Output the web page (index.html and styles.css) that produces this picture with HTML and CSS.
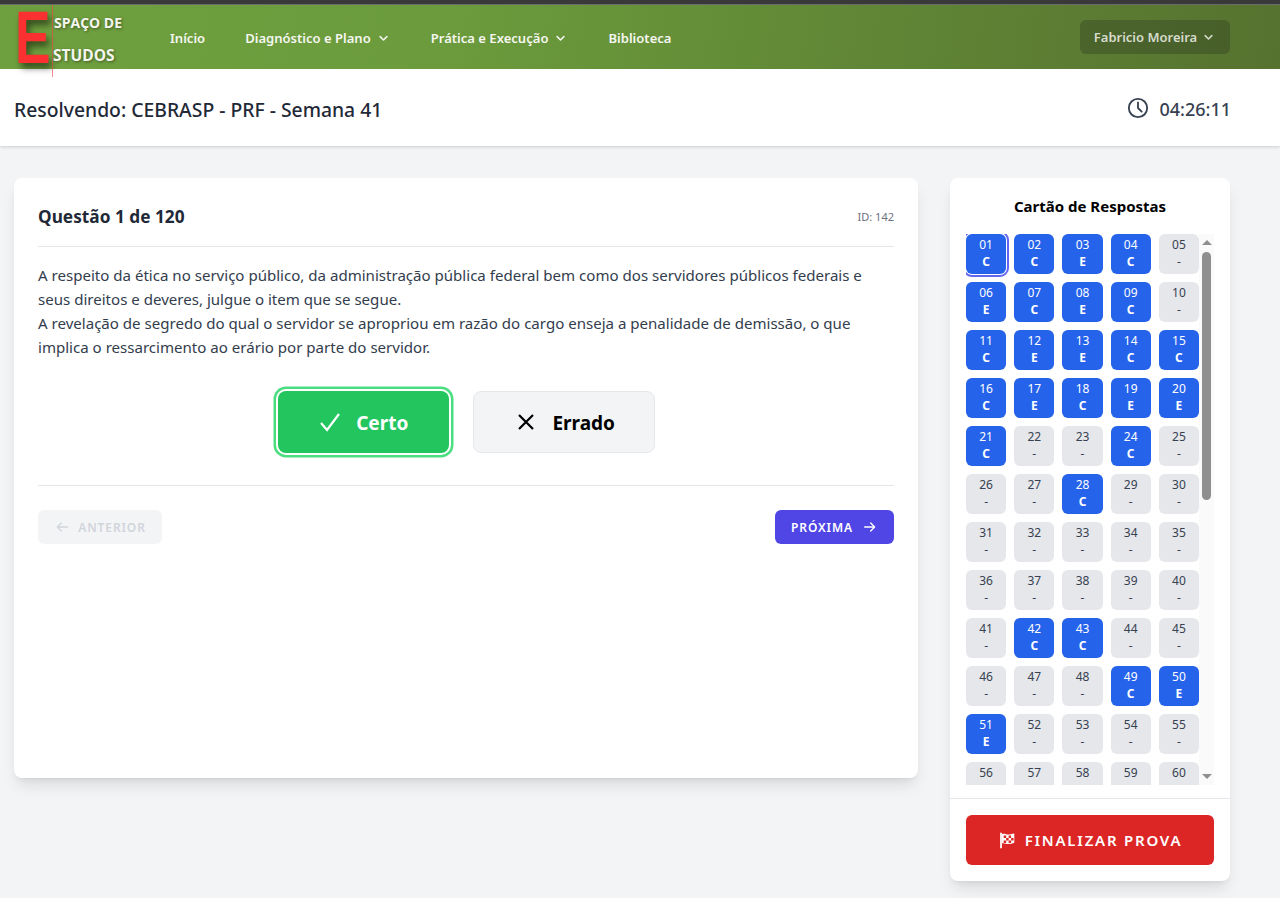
FILE: index.html
```html
<!DOCTYPE html>
<html lang="pt-BR">
<head>
<meta charset="utf-8">
<title>Resolvendo: CEBRASP - PRF - Semana 41</title>
<link rel="stylesheet" href="styles.css">
</head>
<body>
<div class="topline"></div>
<nav class="nav">
  <a class="logo">
    <span class="logo-e">E</span>
    <span class="logo-rule"></span>
    <span class="logo-text"><span>SPAÇO DE</span><span>STUDOS</span></span>
  </a>
  <ul class="links">
    <li>Início</li>
    <li>Diagnóstico e Plano <svg class="chev" viewBox="0 0 20 20"><path d="M5.5 7.5 10 12l4.5-4.5"/></svg></li>
    <li>Prática e Execução <svg class="chev" viewBox="0 0 20 20"><path d="M5.5 7.5 10 12l4.5-4.5"/></svg></li>
    <li>Biblioteca</li>
  </ul>
  <button class="user">Fabricio Moreira <svg class="chev" viewBox="0 0 20 20"><path d="M5.5 7.5 10 12l4.5-4.5"/></svg></button>
</nav>
<header class="sub">
  <h1>Resolvendo: CEBRASP - PRF - Semana 41</h1>
  <div class="timer">
    <svg viewBox="0 0 24 24"><circle cx="12" cy="12" r="10"/><path d="M12 6v6l4 4"/></svg>
    <span>04:26:11</span>
  </div>
</header>
<main class="main">
  <section class="card">
    <div class="q-head">
      <h2>Questão 1 de 120</h2>
      <span class="q-id">ID: 142</span>
    </div>
    <p class="q-text">A respeito da ética no serviço público, da administração pública federal bem como dos servidores públicos federais e seus direitos e deveres, julgue o item que se segue.<br>A revelação de segredo do qual o servidor se apropriou em razão do cargo enseja a penalidade de demissão, o que implica o ressarcimento ao erário por parte do servidor.</p>
    <div class="answers">
      <button class="ans ans-yes"><svg viewBox="0 0 24 24"><path d="M3 13 9 20 21 4"/></svg><span>Certo</span></button>
      <button class="ans ans-no"><svg viewBox="0 0 24 24"><path d="M5 5l14 14M19 5L5 19"/></svg><span>Errado</span></button>
    </div>
    <div class="pager">
      <button class="pg pg-prev"><svg viewBox="0 0 24 24"><path d="M20 12H5M11 6l-6 6 6 6"/></svg>ANTERIOR</button>
      <button class="pg pg-next">PRÓXIMA<svg viewBox="0 0 24 24"><path d="M4 12h15M13 6l6 6-6 6"/></svg></button>
    </div>
  </section>
  <aside class="side">
    <h3>Cartão de Respostas</h3>
    <div class="scroller">
      <div class="clip">
        <div class="grid">
          <div class="cell on cur">01<b>C</b></div><div class="cell on">02<b>C</b></div><div class="cell on">03<b>E</b></div><div class="cell on">04<b>C</b></div><div class="cell">05<b>-</b></div>
          <div class="cell on">06<b>E</b></div><div class="cell on">07<b>C</b></div><div class="cell on">08<b>E</b></div><div class="cell on">09<b>C</b></div><div class="cell">10<b>-</b></div>
          <div class="cell on">11<b>C</b></div><div class="cell on">12<b>E</b></div><div class="cell on">13<b>E</b></div><div class="cell on">14<b>C</b></div><div class="cell on">15<b>C</b></div>
          <div class="cell on">16<b>C</b></div><div class="cell on">17<b>E</b></div><div class="cell on">18<b>C</b></div><div class="cell on">19<b>E</b></div><div class="cell on">20<b>E</b></div>
          <div class="cell on">21<b>C</b></div><div class="cell">22<b>-</b></div><div class="cell">23<b>-</b></div><div class="cell on">24<b>C</b></div><div class="cell">25<b>-</b></div>
          <div class="cell">26<b>-</b></div><div class="cell">27<b>-</b></div><div class="cell on">28<b>C</b></div><div class="cell">29<b>-</b></div><div class="cell">30<b>-</b></div>
          <div class="cell">31<b>-</b></div><div class="cell">32<b>-</b></div><div class="cell">33<b>-</b></div><div class="cell">34<b>-</b></div><div class="cell">35<b>-</b></div>
          <div class="cell">36<b>-</b></div><div class="cell">37<b>-</b></div><div class="cell">38<b>-</b></div><div class="cell">39<b>-</b></div><div class="cell">40<b>-</b></div>
          <div class="cell">41<b>-</b></div><div class="cell on">42<b>C</b></div><div class="cell on">43<b>C</b></div><div class="cell">44<b>-</b></div><div class="cell">45<b>-</b></div>
          <div class="cell">46<b>-</b></div><div class="cell">47<b>-</b></div><div class="cell">48<b>-</b></div><div class="cell on">49<b>C</b></div><div class="cell on">50<b>E</b></div>
          <div class="cell on">51<b>E</b></div><div class="cell">52<b>-</b></div><div class="cell">53<b>-</b></div><div class="cell">54<b>-</b></div><div class="cell">55<b>-</b></div>
          <div class="cell">56<b>-</b></div><div class="cell">57<b>-</b></div><div class="cell">58<b>-</b></div><div class="cell">59<b>-</b></div><div class="cell">60<b>-</b></div>
        </div>
      </div>
      <div class="bar">
        <span class="arr arr-up"></span>
        <span class="thumb"></span>
        <span class="arr arr-down"></span>
      </div>
    </div>
    <div class="side-foot">
      <button class="finish"><svg viewBox="0 0 24 24"><path class="pole" d="M3 1h2.500v22H3z"/><path d="M5.500 3c3-1.500 6 .5 9 .5s6-1.500 8.500-1.500v13c-2.500 1-5.500 2-8.500 2s-6-2-9-1z" class="flag"/><path class="chk" d="M8 5h3.500v3.500H8zM15 5h3.500v3.500H15zM11.500 8.500H15V12h-3.500zM18.500 8.500H22V12h-3.500zM8 12h3.500v3.500H8zM15 12h3.500v3.500H15z"/></svg>FINALIZAR PROVA</button>
    </div>
  </aside>
</main>
</body>
</html>
```
FILE: styles.css
```css
* { box-sizing: border-box; }
html, body { margin: 0; padding: 0; }
body {
  background: #f3f4f6;
  color: #1f2937;
  font-family: "Noto Sans", "Open Sans", sans-serif;
  height: 898px;
  overflow: hidden;
}
button { font-family: inherit; border: 0; padding: 0; cursor: pointer; }
h1, h2, h3, p, ul { margin: 0; padding: 0; }

.topline { height: 5px; background: #393939; border-bottom: 1px solid #6b6b6b; }

.nav {
  height: 64px;
  display: flex;
  align-items: center;
  padding: 0 50px 0 19px;
  background: linear-gradient(100deg, #6fa03f 0%, #6b9b3c 35%, #56722f 100%);
  position: relative;
  z-index: 2;
}
.logo { display: block; flex: none; width: 151px; height: 64px; position: relative; }
.logo-e {
  position: absolute;
  left: -4px;
  top: 1px;
  font-family: "Liberation Sans", sans-serif;
  font-weight: 700;
  font-size: 74px;
  line-height: 64px;
  color: #fb3030;
  text-shadow: 4px 5px 9px rgba(0,0,0,.55);
  transform: scaleX(.72);
  transform-origin: left center;
}
.logo-rule {
  position: absolute;
  left: 33px;
  top: 0;
  width: 1px;
  height: 72px;
  background: rgba(240, 70, 70, .6);
}
.logo-text {
  position: absolute;
  left: 35px;
  top: 8px;
  display: flex;
  flex-direction: column;
  gap: 12px;
  color: #f4f6ee;
  font-family: "Open Sans", sans-serif;
  font-weight: 700;
  font-size: 14px;
  line-height: 20px;
  text-shadow: 1px 1px 3px rgba(0,0,0,.45);
}
.logo-text span:last-child { margin-left: -1px; font-size: 15.500px; }

.links { display: flex; list-style: none; gap: 40px; color: #f5f7f0; font-size: 13.050px; font-weight: 600; padding-top: 2px; }
.links li { display: flex; align-items: center; gap: 5px; white-space: nowrap; }
.chev { width: 15px; height: 15px; fill: none; stroke: currentColor; stroke-width: 2; stroke-linecap: round; stroke-linejoin: round; }

.user {
  margin-left: auto;
  width: 150px;
  height: 34px;
  background: rgba(40, 50, 30, .32);
  border-radius: 6px;
  color: #d6dccb;
  font-size: 13px;
  font-weight: 600;
  display: flex;
  align-items: center;
  justify-content: center;
  gap: 4px;
}

.sub {
  height: 77px;
  background: #fff;
  display: flex;
  align-items: center;
  justify-content: space-between;
  padding: 3px 49px 0 14px;
  box-shadow: 0 1px 3px rgba(0,0,0,.16);
  position: relative;
}
.sub h1 { font-size: 19.340px; font-weight: 500; color: #1f2937; }
.timer { display: flex; align-items: center; gap: 10px; font-size: 18px; font-weight: 500; color: #374151; }
.timer svg { width: 22px; height: 22px; margin-top: -2px; fill: none; stroke: currentColor; stroke-width: 2; stroke-linecap: round; stroke-linejoin: round; }

.main { display: flex; align-items: flex-start; gap: 32px; padding: 32px 50px 0 14px; }

.card {
  flex: 1;
  height: 600px;
  background: #fff;
  border-radius: 8px;
  padding: 24px;
  box-shadow: 0 10px 15px -3px rgba(0,0,0,.1), 0 4px 6px -4px rgba(0,0,0,.1);
}
.q-head { display: flex; justify-content: space-between; align-items: center; height: 45px; padding-bottom: 16px; border-bottom: 1px solid #e5e7eb; }
.q-head h2 { font-size: 17.250px; font-weight: 700; color: #1f2937; }
.q-id { font-size: 11px; color: #6b7280; }
.q-text { margin-top: 16px; font-size: 15.070px; line-height: 24px; color: #333d4d; }
.answers { display: flex; justify-content: center; gap: 24px; margin-top: 32px; padding-bottom: 32px; border-bottom: 1px solid #e5e7eb; }
.ans {
  height: 62px;
  border-radius: 8px;
  font-size: 19px;
  font-weight: 700;
  display: flex;
  align-items: center;
  justify-content: center;
  gap: 14.500px;
}
.ans span { position: relative; top: 1px; }
.ans svg { width: 24px; height: 24px; fill: none; stroke: currentColor; stroke-width: 2.200; }
.ans-yes { width: 171px; background: #22c55e; color: #fff; box-shadow: 0 0 0 2px #fff, 0 0 0 4.500px #4ade80; }
.ans-no { width: 182px; background: #f3f4f6; color: #000; border: 1px solid #e5e7eb; padding-left: 2px; }

.pager { display: flex; justify-content: space-between; margin-top: 24px; }
.pg {
  height: 34px;
  border-radius: 6px;
  font-size: 12px;
  font-weight: 600;
  letter-spacing: .900px;
  display: flex;
  align-items: center;
  gap: 8px;
}
.pg svg { width: 16px; height: 16px; fill: none; stroke: currentColor; stroke-width: 2; stroke-linecap: round; stroke-linejoin: round; }
.pg-prev { width: 124px; justify-content: center; background: #f3f4f6; color: #d1d5db; }
.pg-next { width: 119px; justify-content: center; gap: 9px; background: #4f46e5; color: #fff; }

.side {
  width: 280px;
  height: 703px;
  flex: none;
  background: #fff;
  border-radius: 8px;
  box-shadow: 0 10px 15px -3px rgba(0,0,0,.1), 0 4px 6px -4px rgba(0,0,0,.1);
  display: flex;
  flex-direction: column;
}
.side h3 { font-size: 15px; font-weight: 700; color: #000; text-align: center; margin-top: 17px; line-height: 22px; }
.scroller { display: flex; margin: 17px 16px 0; height: 551px; }
.clip { flex: 1; overflow: hidden; min-width: 0; }
.grid { display: grid; grid-template-columns: repeat(5, 1fr); gap: 8px; }
.cell {
  height: 40px;
  border-radius: 6px;
  background: #e5e7eb;
  color: #374151;
  font-size: 12px;
  line-height: 16px;
  text-align: center;
  padding-top: 2.500px;
}
.cell b { display: block; font-weight: 400; margin-top: 1px; }
.cell.on b { font-weight: 700; }
.cell.on { background: #2563eb; color: #fff; }
.cell.cur { box-shadow: 0 0 0 1px #fff, 0 0 0 3px #6366f1; }

.bar { width: 15px; flex: none; background: #fafafa; display: flex; flex-direction: column; align-items: center; position: relative; }
.thumb { width: 9px; height: 248px; margin-top: 18px; background: #8f8f8f; border-radius: 5px; }
.arr { position: absolute; width: 0; height: 0; border-left: 5px solid transparent; border-right: 5px solid transparent; }
.arr-up { top: 6px; border-bottom: 5px solid #8f8f8f; }
.arr-down { bottom: 6px; border-top: 5px solid #8f8f8f; }

.side-foot { margin-top: 13px; border-top: 1px solid #e5e7eb; padding: 16px; }
.finish {
  width: 100%;
  height: 50px;
  border-radius: 6px;
  background: #dc2626;
  color: #fff;
  font-size: 15px;
  font-weight: 600;
  letter-spacing: 1.770px;
  display: flex;
  align-items: center;
  justify-content: center;
  gap: 10px;
}
.finish svg { width: 17px; height: 17px; }
.pole, .flag { fill: #fff; }
.chk { fill: #dc2626; }
```
